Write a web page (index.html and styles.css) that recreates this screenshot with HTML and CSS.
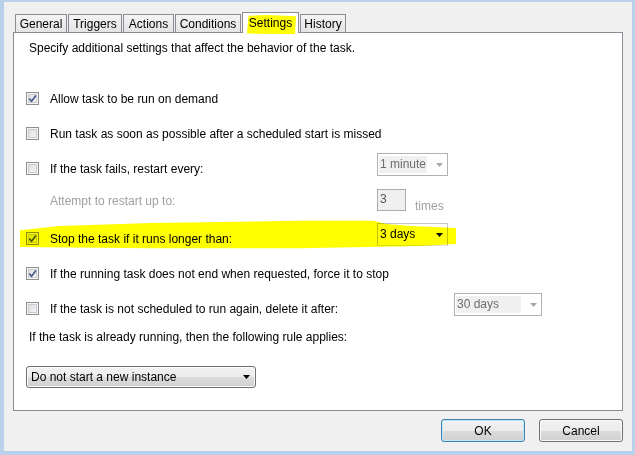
FILE: index.html
```html
<!DOCTYPE html>
<html lang="en">
<head>
<meta charset="UTF-8" />
<title>Task Properties - Settings</title>
<link rel="stylesheet" href="styles.css">
</head>
<body>

<div class="window">

  <!-- tab strip -->
  <div class="tabs">
    <div class="tab t-general">General</div>
    <div class="tab t-triggers">Triggers</div>
    <div class="tab t-actions">Actions</div>
    <div class="tab t-conditions">Conditions</div>
    <div class="tab t-settings active">Settings</div>
    <div class="tab t-history">History</div>
  </div>

  <div class="panel">
    <div class="row text">Specify additional settings that affect the behavior of the task.</div>

    <div class="row r-allow">
      <span class="cb checked"><svg width="9" height="9" viewBox="0 0 9 9"><path d="M1.3 4.6 L3.6 7.2 L7.9 1.4" /></svg></span>
      <span class="lbl">Allow task to be run on demand</span>
    </div>

    <div class="row r-next">
      <span class="cb"></span>
      <span class="lbl">Run task as soon as possible after a scheduled start is missed</span>
    </div>

    <div class="row r-next">
      <span class="cb"></span>
      <span class="lbl col1">If the task fails, restart every:</span>
      <div class="combo off w71">
        <span class="val">1 minute</span>
        <svg class="arr" width="7" height="4" viewBox="0 0 7 4"><path d="M0 0h7L3.5 4z" /></svg>
      </div>
    </div>

    <div class="row r-attempt">
      <span class="lbl col1 indent dim">Attempt to restart up to:</span>
      <span class="tbox">3</span>
      <span class="times dim">times</span>
    </div>

    <div class="row r-stop marked">
      <span class="cb checked"><svg width="9" height="9" viewBox="0 0 9 9"><path d="M1.3 4.6 L3.6 7.2 L7.9 1.4" /></svg></span>
      <span class="lbl col1">Stop the task if it runs longer than:</span>
      <div class="combo w71">
        <span class="val">3 days</span>
        <svg class="arr" width="7" height="4" viewBox="0 0 7 4"><path d="M0 0h7L3.5 4z" /></svg>
      </div>
    </div>

    <div class="row r-next">
      <span class="cb checked"><svg width="9" height="9" viewBox="0 0 9 9"><path d="M1.3 4.6 L3.6 7.2 L7.9 1.4" /></svg></span>
      <span class="lbl">If the running task does not end when requested, force it to stop</span>
    </div>

    <div class="row r-next">
      <span class="cb"></span>
      <span class="lbl col2">If the task is not scheduled to run again, delete it after:</span>
      <div class="combo off w88">
        <span class="val">30 days</span>
        <svg class="arr" width="7" height="4" viewBox="0 0 7 4"><path d="M0 0h7L3.5 4z" /></svg>
      </div>
    </div>

    <div class="row text r-rule">If the task is already running, then the following rule applies:</div>

    <div class="select">
      <span class="val">Do not start a new instance</span>
      <svg class="arr" width="7" height="4" viewBox="0 0 7 4"><path d="M0 0h7L3.5 4z" /></svg>
    </div>
  </div>

  <div class="buttons">
    <button class="btn default">OK</button>
    <button class="btn">Cancel</button>
  </div>

</div>

</body>
</html>
```

FILE: styles.css
```css
body {
  margin: 0;
  background: #b9d1ea;
  font-family: "Liberation Sans", Arial, sans-serif;
  font-size: 12px;
  color: #000;
}
.window {
  width: 628px;
  height: 449px;
  margin: 2px 0 0 4px;
  padding: 10px 0 0 9px;
  box-sizing: border-box;
  background: #f0f0f0;
}

/* tabs */
.tabs {
  display: flex;
  align-items: flex-end;
  height: 21px;
  padding-left: 2px;
  margin-bottom: -1px;
  position: relative;
  z-index: 1;
}
.tab {
  height: 18px;
  box-sizing: border-box;
  border: 1px solid #898c95;
  border-bottom: 0;
  padding-top: 2px;
  line-height: 15px;
  text-align: center;
  margin: 0 1px 1px 0;
  background: linear-gradient(#f4f4f4, #e4e4e4);
}
.t-general { width: 52px; }
.t-triggers { width: 54px; }
.t-actions { width: 51px; }
.t-conditions { width: 66px; }
.t-settings { width: 57px; }
.t-history { width: 46px; }
.tab.active {
  height: 21px;
  padding-top: 3px;
  margin-bottom: 0;
  background: #fff;
  position: relative;
}
.tab.active::after {
  content: "";
  position: absolute;
  left: 4px;
  top: 2px;
  width: 49px;
  height: 19px;
  background: #ffff00;
  mix-blend-mode: multiply;
  clip-path: polygon(3% 4%, 40% 0, 100% 6%, 98% 100%, 0 98%);
}

/* panel */
.panel {
  width: 610px;
  height: 379px;
  box-sizing: border-box;
  border: 1px solid #898c95;
  background: #fff;
  padding-top: 3px;
}
.row {
  display: flex;
  align-items: flex-start;
  height: 24px;
  line-height: 24px;
}
.row.text {
  padding-left: 15px;
}
.r-allow { margin-top: 27px; }
.r-next { margin-top: 11px; }
.r-attempt { margin-top: 8px; }
.r-stop { margin-top: 14px; }
.r-rule { margin-top: 4px; }

.cb {
  flex: 0 0 13px;
  width: 13px;
  height: 13px;
  box-sizing: border-box;
  margin: 5px 11px 0 12px;
  border: 1px solid #8f8f8f;
  background: linear-gradient(135deg, #d6d8db, #fbfbfb);
  box-shadow: inset 0 0 0 1px #f6f6f6, inset 0 0 0 2px #c9ccd1;
  display: flex;
  align-items: center;
  justify-content: center;
}
.cb svg path {
  fill: none;
  stroke: #43568c;
  stroke-width: 1.6;
}
.lbl.col1 { flex: 0 0 327px; }
.lbl.col2 { flex: 0 0 404px; }
.lbl.indent { margin-left: 36px; }
.dim { color: #a0a0a0; }

/* combo boxes */
.combo {
  display: flex;
  align-items: center;
  height: 23px;
  box-sizing: border-box;
  margin-top: -4px;
  border: 1px solid #c2c4c9;
  border-bottom-color: #dde1e6;
  background: #fff;
  line-height: 17px;
}
.w71 { width: 71px; }
.w88 { width: 88px; }
.combo .val {
  flex: 1;
  padding-left: 2px;
}
.combo .arr {
  margin: 0 4px 0 0;
}
.combo .arr path { fill: #000; }
.combo.off {
  border-color: #adb2b5;
  color: #6d6d6d;
}
.combo.off .val {
  flex: 1;
  height: 17px;
  margin: 0 9px 0 1px;
  padding-left: 1px;
  background: #f0f0f0;
}
.combo.off .arr path { fill: #a8a8a8; }

.tbox {
  width: 29px;
  height: 22px;
  box-sizing: border-box;
  border: 1px solid #a9acb0;
  background: #f0f0f0;
  color: #555;
  padding-left: 2px;
  line-height: 18px;
}
.times {
  margin: 5px 0 0 9px;
}

/* the yellow marker stroke over the "stop" row */
.marked {
  position: relative;
}
.marked::after {
  content: "";
  position: absolute;
  left: 6px;
  top: -7px;
  width: 436px;
  height: 29px;
  background: #ffff00;
  mix-blend-mode: multiply;
  clip-path: polygon(0 35%, 9% 21%, 30% 10%, 64% 3%, 81% 3%, 84% 14%, 90% 21%, 100% 28%, 100% 83%, 92% 90%, 64% 97%, 30% 97%, 0 93%);
}

.select {
  display: flex;
  align-items: center;
  width: 230px;
  height: 22px;
  box-sizing: border-box;
  margin: 17px 0 0 12px;
  padding: 0 5px 0 4px;
  border: 1px solid #707070;
  border-radius: 3px;
  background: linear-gradient(#f2f2f2, #ebebeb 50%, #dddddd 50%, #cfcfcf);
  box-shadow: inset 0 0 0 1px #fbfbfb;
}
.select .val { flex: 1; }
.select .arr path { fill: #000; }

/* dialog buttons */
.buttons {
  display: flex;
  justify-content: flex-end;
  gap: 14px;
  width: 610px;
  margin-top: 8px;
}
.btn {
  width: 84px;
  height: 23px;
  padding: 0;
  box-sizing: border-box;
  border: 1px solid #707070;
  border-radius: 3px;
  background: linear-gradient(#f2f2f2, #ebebeb 50%, #dddddd 50%, #cfcfcf);
  box-shadow: inset 0 0 0 1px #fbfbfb;
  font-family: "Liberation Sans", Arial, sans-serif;
  font-size: 12px;
  color: #000;
}
.btn.default {
  border-color: #3c7fb1;
  box-shadow: inset 0 0 0 1px #bfe9fb;
}
```
